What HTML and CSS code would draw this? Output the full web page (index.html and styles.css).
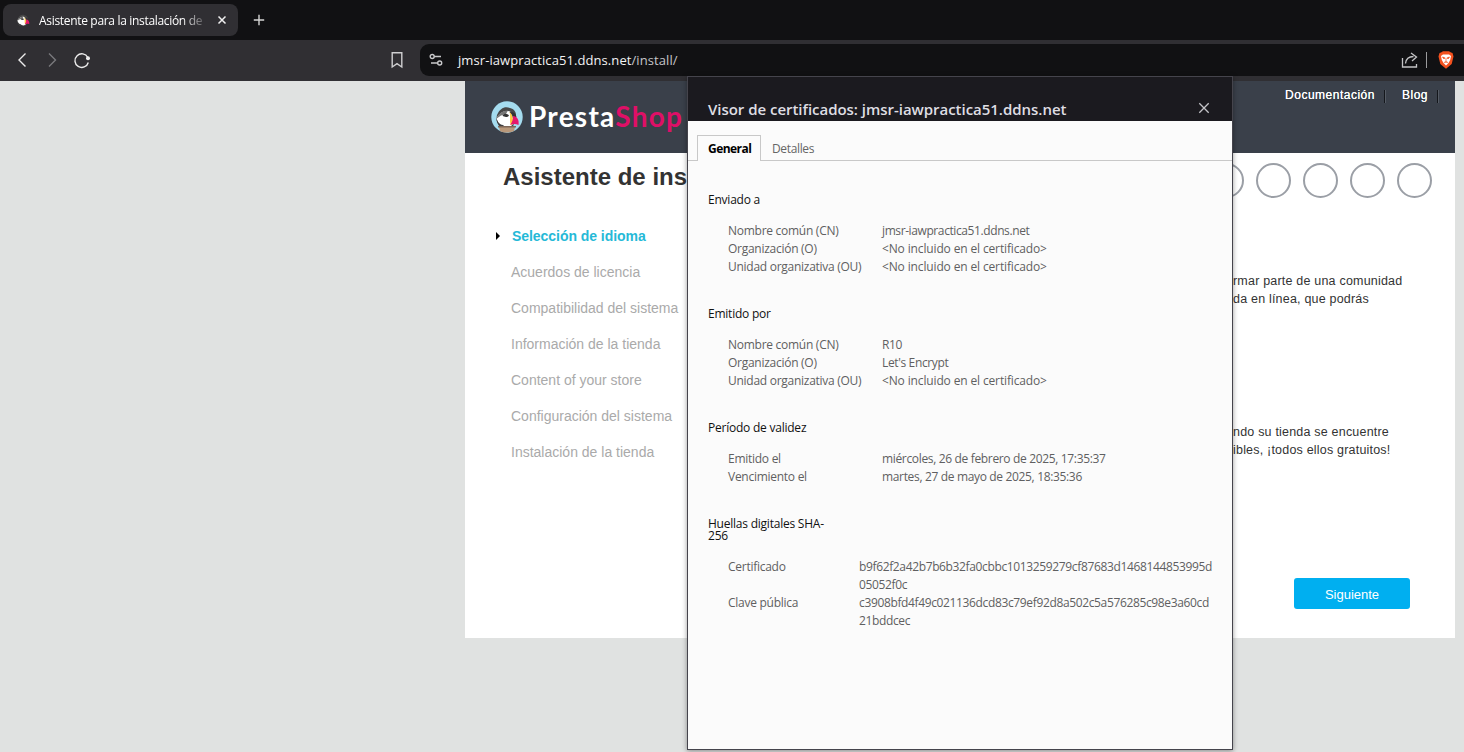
FILE: index.html
```
<!DOCTYPE html>
<html lang="es">
<head>
<meta charset="utf-8">
<title>Asistente para la instalación de PrestaShop</title>
<link rel="stylesheet" href="styles.css">
</head>
<body>
<svg width="0" height="0" class="defs">
  <symbol id="puffin" viewBox="0 0 32 32">
    <path d="M6 14C9 7 14 5 19 7c4 1 6 4 6 7l-3 12H9c-3-3-4-8-3-12z" fill="#484848"/>
    <path d="M5.500 17C8 13 12 9.500 17 10c4 .5 6 4 6 8 0 4-2 8-6 8-3 0-4-1-5-2-3 0-6-3-6.500-7z" fill="#fff"/>
    <path d="M5 18c2-5 6-8 12-8.500L15 13l-5 1.500z" fill="#777"/>
    <path d="M5.500 17c1 4 3 7 7 8h-3c-3-2-4.500-5-4-8z" fill="#3c3c3c"/>
    <path d="M11.500 14.500c2-2.500 5-2 6.500.2-1.500 1.600-4.500 1.800-6.500-.2z" fill="#333"/>
    <path d="M18.500 11c2 1 4 5 3.500 12l-2 1c-2-3 0-9-1.500-13z" fill="#ffc83c"/>
    <path d="M18.500 11c4-.5 6.500 1.500 7 5l-3.500 1.500c-.5-3-1.500-5-3.500-6.500z" fill="#333"/>
    <path d="M22 15c4 0 6.500 4 5.500 9-3-1.500-6-1-8.500 0 2.500-3 3.200-6 3-9z" fill="#e5186b"/>
  </symbol>
</svg>

<div class="tabstrip">
  <div class="tab">
    <svg class="favicon" viewBox="3 3 26 26"><use href="#puffin" width="32" height="32"/></svg>
    <span class="tab-title">Asistente para la instalación de</span>
    <svg class="tab-close" viewBox="0 0 10 10"><path d="M1.5 1.5l7 7M8.5 1.5l-7 7"/></svg>
  </div>
  <svg class="new-tab" viewBox="0 0 12 12"><path d="M6 .8v10.4M.8 6h10.4"/></svg>
</div>

<div class="toolbar">
  <svg class="nav back" viewBox="0 0 16 16"><path d="M11.5 1.5L5 8l6.500 6.500"/></svg>
  <svg class="nav forward" viewBox="0 0 16 16"><path d="M5 1.500L11.500 8 5 14.500"/></svg>
  <svg class="nav reload" viewBox="0 0 18 18"><path d="M14.800 6.500A6.800 6.800 0 1 0 15.300 11.500"/><circle cx="15" cy="7.200" r="2"/></svg>
  <svg class="nav bookmark" viewBox="0 0 14 18"><path d="M2.200 1.700h9.600v14.300L7 12.700 2.200 16z"/></svg>
  <div class="address">
    <svg class="site-icon" viewBox="0 0 14 14"><circle cx="3.200" cy="3.500" r="2"/><path d="M5.200 3.500H12M2 10h6.500"/><circle cx="10.700" cy="10" r="2"/></svg>
    <span class="url">jmsr-iawpractica51.ddns.net<span class="path">/install/</span></span>
    <svg class="share" viewBox="0 0 18 18"><path d="M1.500 7v9h14v-3M4.500 12.500c.5-5 3-7 8-7M10 2l5.500 4L11 10"/></svg>
    <span class="divider"></span>
    <svg class="shield" viewBox="0 0 16 18"><path d="M3 1.500L5 .2h6l2 1.300 1.500.5 1 3.500-1.800 7.500L8 17.800 2.300 13 .5 5.500 1.500 2z" fill="#f4511e"/><path d="M3 5l2-1.500h6L13 5l-.8 4-1.700 3L8 14.500 5.500 12 3.800 9z" fill="#fff"/><path d="M4.500 6l2.300.8L6 8zM11.500 6l-2.300.8L10 8zM8 7v3M6 11.500l2-1 2 1" fill="#f4511e" stroke="#f4511e" stroke-width=".7"/></svg>
  </div>
</div>

<div class="viewport">
  <div class="installer">
    <header class="brandbar">
      <div class="brand">
        <svg class="logo" viewBox="0 0 32 32"><circle cx="16" cy="16" r="15.700" fill="#a5dcef"/><use href="#puffin" width="32" height="32"/><path d="M8 26h16l-1 4c-4 2-10 2-14 0z" fill="#b9987a"/><path d="M7 25h18v1.500H7z" fill="#7d6657"/></svg>
        <span class="brand-name">Presta<span>Shop</span></span>
      </div>
      <nav class="links"><a>Documentación</a><a>Blog</a></nav>
    </header>
    <div class="heading">
      <h1>Asistente de ins</h1>
      <div class="steps"><i></i><i></i><i></i><i></i><i></i></div>
    </div>
    <div class="columns">
      <ul class="menu">
        <li class="current">Selección de idioma</li>
        <li>Acuerdos de licencia</li>
        <li>Compatibilidad del sistema</li>
        <li>Información de la tienda</li>
        <li>Content of your store</li>
        <li>Configuración del sistema</li>
        <li>Instalación de la tienda</li>
      </ul>
      <div class="copy">
        <p>rmar parte de una comunidad<br>da en línea, que podrás</p>
        <p>ndo su tienda se encuentre<br>ibles, ¡todos ellos gratuitos!</p>
        <button class="next">Siguiente</button>
      </div>
    </div>
  </div>
</div>

<section class="dialog">
  <header class="dialog-head">
    <h2>Visor de certificados: jmsr-iawpractica51.ddns.net</h2>
    <svg class="dialog-close" viewBox="0 0 12 12"><path d="M1.300 1.300l9.400 9.400M10.700 1.300l-9.400 9.400"/></svg>
  </header>
  <div class="dialog-tabs"><span class="active">General</span><span class="other">Detalles</span></div>
  <div class="details">
    <section class="group">
      <h3>Enviado a</h3>
      <dl>
        <dt>Nombre común (CN)</dt><dd class="host">jmsr-iawpractica51.ddns.net</dd>
        <dt>Organización (O)</dt><dd class="none">&lt;No incluido en el certificado&gt;</dd>
        <dt>Unidad organizativa (OU)</dt><dd class="none">&lt;No incluido en el certificado&gt;</dd>
      </dl>
    </section>
    <section class="group">
      <h3>Emitido por</h3>
      <dl>
        <dt>Nombre común (CN)</dt><dd>R10</dd>
        <dt>Organización (O)</dt><dd>Let's Encrypt</dd>
        <dt>Unidad organizativa (OU)</dt><dd class="none">&lt;No incluido en el certificado&gt;</dd>
      </dl>
    </section>
    <section class="group">
      <h3>Período de validez</h3>
      <dl>
        <dt>Emitido el</dt><dd class="date">miércoles, 26 de febrero de 2025, 17:35:37</dd>
        <dt>Vencimiento el</dt><dd class="date">martes, 27 de mayo de 2025, 18:35:36</dd>
      </dl>
    </section>
    <section class="group">
      <h3>Huellas digitales SHA-<br>256</h3>
      <dl class="hashes">
        <dt>Certificado</dt><dd>b9f62f2a42b7b6b32fa0cbbc1013259279cf87683d1468144853995d<br>05052f0c</dd>
        <dt>Clave pública</dt><dd>c3908bfd4f49c021136dcd83c79ef92d8a502c5a576285c98e3a60cd<br>21bddcec</dd>
      </dl>
    </section>
  </div>
</section>
</body>
</html>
```
FILE: styles.css
```
* { box-sizing: border-box; }
body {
  margin: 0;
  width: 1464px;
  height: 752px;
  overflow: hidden;
  position: relative;
  background: #e0e2e1;
  font-family: "Open Sans", "Noto Sans", sans-serif;
  font-size: 12px;
}
svg { display: block; flex: none; fill: none; }
.defs { position: absolute; }
h1, h2, h3, p, ul, dl, dd { margin: 0; padding: 0; }

/* Browser chrome */
.tabstrip { height: 40px; padding: 4px 3px; display: flex; align-items: center; background: #111113; }
.tab { width: 235px; height: 32px; border-radius: 8px; background: #302f33; display: flex; align-items: center; padding-left: 13px; }
.favicon { width: 14px; height: 14px; }
.tab-title {
  width: 164px; margin-left: 9px; white-space: nowrap; overflow: hidden;
  font-size: 12px; letter-spacing: -.32px; color: #fff;
  -webkit-mask-image: linear-gradient(90deg, #000 87%, transparent 104%);
  mask-image: linear-gradient(90deg, #000 87%, transparent 104%);
}
.tab-close { width: 10px; height: 10px; margin-left: 14px; stroke: #f0f0f0; stroke-width: 1.500; }
.new-tab { width: 12px; height: 12px; margin-left: 15px; stroke: #d5d5d5; stroke-width: 1.400; }
.toolbar { height: 41px; display: flex; align-items: center; background: #302f33; padding: 0 0 2px 14px; }
.nav { width: 16px; height: 16px; stroke: #ececec; stroke-width: 1.400; }
.forward { margin-left: 14px; stroke: #79797d; }
.reload { width: 18px; height: 18px; margin-left: 13px; }
.reload circle { fill: #ececec; stroke: none; }
.bookmark { width: 14px; height: 18px; margin-left: 299px; stroke: #cfcfd1; }
.address { flex: 1; height: 32px; margin-left: 16px; border-radius: 9px 0 0 9px; background: #111113; display: flex; align-items: center; padding: 0 10px 0 9px; }
.site-icon { width: 14px; height: 14px; stroke: #c9c9cb; stroke-width: 1.400; }
.url { margin-left: 15px; font-size: 13px; letter-spacing: .08px; color: #f3f3f3; white-space: nowrap; }
.path { color: #c5c5c9; }
.share { width: 18px; height: 18px; margin-left: auto; stroke: #c4c4c6; stroke-width: 1.300; }
.divider { width: 1px; height: 16px; margin-left: 7px; background: #9b9b9d; }
.shield { width: 16px; height: 18px; margin-left: 11px; }

/* Installer page */
.viewport { height: 671px; padding-left: 465px; font-family: "Liberation Sans", Arial, sans-serif; }
.installer { width: 990px; height: 557px; background: #fff; }
.brandbar { height: 72px; background: #3a404a; display: flex; justify-content: space-between; padding-left: 26px; }
.brand { display: flex; align-items: center; gap: 6px; }
.logo { width: 32px; height: 32px; }
.brand-name { font: 700 28px/32px Lato, sans-serif; letter-spacing: 1.250px; color: #fff; position: relative; top: -1px; }
.brand-name span { color: #df0f67; }
.links { display: flex; padding-top: 5px; color: #fff; font-size: 12px; line-height: 19px; }
.links a { height: 21px; padding-right: 11px; margin-right: 16px; background: linear-gradient(90deg, #14171c 50%, #555b64 50%) right 4px / 2px 13px no-repeat; white-space: nowrap; letter-spacing: .5px; }
.links a { text-shadow: 0 0 .5px #fff; }
.heading { height: 64px; display: flex; justify-content: space-between; padding: 9px 23px 0 38px; }
h1 { font-size: 24px; line-height: 30px; color: #333; white-space: nowrap; }
.steps { display: flex; gap: 12px; padding-top: 1px; }
.steps i { width: 35px; height: 35px; border: 2px solid #9b9fa6; border-radius: 50%; }
.columns { display: flex; }
.menu { list-style: none; width: 222px; padding: 1px 0 0 46px; font-size: 14px; line-height: 36px; color: #aaa; white-space: nowrap; }
.current { color: #25b9d7; font-weight: 700; font-size: 14px; letter-spacing: -.05px; display: flex; align-items: center; margin-left: -15px; }
.current::before { content: ""; border-left: 4px solid #000; border-top: 4px solid transparent; border-bottom: 4px solid transparent; margin-right: 12px; }
.copy { flex: 1; padding: 55px 45px 0 546px; font-size: 12.500px; letter-spacing: .2px; line-height: 18px; color: #333; }
.copy p { white-space: nowrap; height: 151px; }
.next { display: block; width: 116px; height: 31px; margin: 4px 0 0 auto; padding: 2px 0 0; border: 0; border-radius: 3px; background: #00aff0; color: #fff; font: 13px "Liberation Sans", Arial, sans-serif; }

/* Certificate dialog floats over the page */
.dialog { position: absolute; left: 687px; top: 76px; width: 546px; height: 674px; border: 1px solid #45444c; background: #fbfbfb; box-shadow: 0 1px 5px #0006; }
.dialog-head { height: 44px; background: #1b1a1f; display: flex; justify-content: space-between; padding: 21px 22px 0 20px; }
h2 { font-size: 15px; line-height: 22px; font-weight: 600; letter-spacing: -.03px; color: #dfdee3; white-space: nowrap; }
.dialog-close { width: 12px; height: 12px; margin-top: 4px; stroke: #c4c4c8; stroke-width: 1.300; }
.dialog-tabs { height: 40px; border-bottom: 1px solid #c8c8c8; display: flex; align-items: flex-end; padding-left: 9px; line-height: 25px; }
.dialog-tabs span { height: 26px; }
.active { width: 64px; padding-left: 10px; margin-bottom: -1px; border: 1px solid #c8c8c8; border-bottom: 0; background: #fbfbfb; font-weight: 700; letter-spacing: -.55px; color: #000; }
.other { margin-left: 11px; color: #666; line-height: 29px; letter-spacing: -.35px; }
.details { padding: 33px 20px 0; }
.group { margin-bottom: 32px; }
h3 { font-size: 12px; line-height: 12px; font-weight: 400; letter-spacing: -.23px; color: #111; white-space: nowrap; }
dl { display: grid; grid-template-columns: 154px 1fr; padding: 16px 0 0 20px; line-height: 18px; color: #5f5f61; white-space: nowrap; }
dt { letter-spacing: -.27px; }
dd { letter-spacing: -.36px; }
dd.host { letter-spacing: -.4px; }
dd.none { letter-spacing: -.14px; }
dd.date { letter-spacing: -.34px; }
.hashes { grid-template-columns: 131px 1fr; }
```
